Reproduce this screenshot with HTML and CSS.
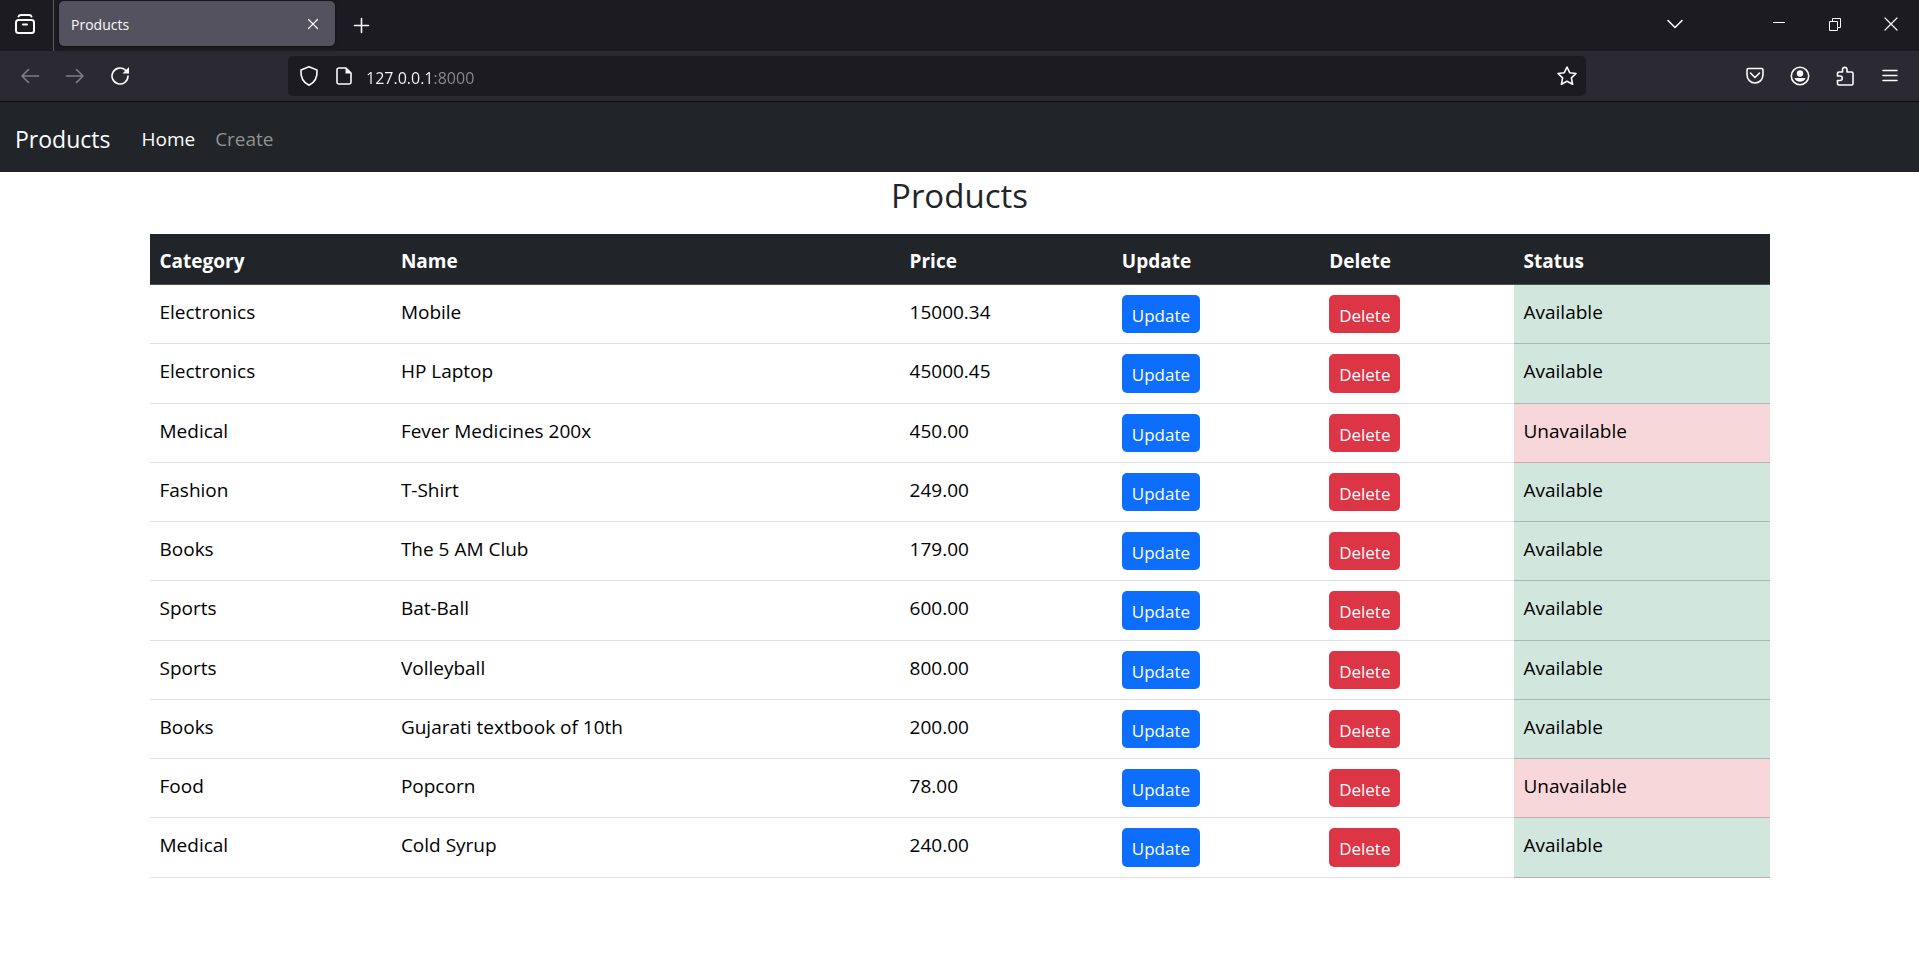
FILE: index.html
```html
<!DOCTYPE html>
<html lang="en">
<head>
<meta charset="utf-8">
<title>Products</title>
<link rel="stylesheet" href="styles.css">
</head>
<body>
<header class="browser">
  <div class="tabbar">
    <button class="view-btn" aria-label="Firefox View">
      <svg class="icon bold" width="24" height="24" viewBox="0 0 24 24"><rect x="3" y="8" width="18" height="13" rx="2.5"/><path d="M5.500 4.500Q6 3 8 3H16Q18 3 18.500 4.500M10 12.500H14"/></svg>
    </button>
    <div class="tab">
      <span class="tab-title">Products</span>
      <button class="tab-close" aria-label="Close tab">
        <svg class="icon thin" width="12" height="12" viewBox="0 0 12 12"><path d="M1.500 1.500L10.500 10.500M10.500 1.500L1.500 10.500"/></svg>
      </button>
    </div>
    <button class="tool" aria-label="New tab">
      <svg class="icon" width="17" height="17" viewBox="0 0 17 17"><path d="M8.500 1.500V15.500M1.500 8.500H15.500"/></svg>
    </button>
    <div class="window-controls">
      <button class="list-tabs" aria-label="List all tabs">
        <svg class="icon" width="18" height="12" viewBox="0 0 18 12"><path d="M2 2.500L9 9.500L16 2.500"/></svg>
      </button>
      <button class="win" aria-label="Minimize">
        <svg class="icon crisp" width="14" height="14" viewBox="0 0 14 14"><path d="M1 5.500H13"/></svg>
      </button>
      <button class="win" aria-label="Restore">
        <svg class="icon crisp" width="14" height="14" viewBox="0 0 14 14"><path d="M1.500 4.500H9.500V13.500H1.500ZM4.500 4.500V1.500H12.500V10.500H9.500"/></svg>
      </button>
      <button class="win" aria-label="Close">
        <svg class="icon thin" width="14" height="14" viewBox="0 0 14 14"><path d="M1 1L13 13M13 1L1 13"/></svg>
      </button>
    </div>
  </div>
  <div class="toolbar">
    <div class="tools">
      <button class="tool dim" aria-label="Back">
        <svg class="icon" width="20" height="20" viewBox="0 0 20 20"><path d="M18.500 10H2M8.500 3.500L2 10L8.500 16.500"/></svg>
      </button>
      <button class="tool dim" aria-label="Forward">
        <svg class="icon" width="20" height="20" viewBox="0 0 20 20"><path d="M1.500 10H18M11.500 3.500L18 10L11.500 16.500"/></svg>
      </button>
      <button class="tool" aria-label="Reload">
        <svg class="icon" width="20" height="20" viewBox="0 0 20 20"><path d="M18 10A8 8 0 1 1 15.500 4.200"/><path class="solid" d="M19 1V7.500H12.500Z"/></svg>
      </button>
    </div>
    <div class="urlbar">
      <svg class="icon shield" width="20" height="22" viewBox="0 0 20 22"><path d="M10 1.700L18 5C18.600 12 15.500 17.500 10 20.300C4.500 17.500 1.400 12 2 5Z"/></svg>
      <svg class="icon" width="18" height="20" viewBox="0 0 18 20"><path d="M11 2H4Q2 2 2 4V16Q2 18 4 18H14Q16 18 16 16V7Z"/><path class="solid" d="M10.500 1.500V7.500H16.500Z"/></svg>
      <input class="url" type="text" value="127.0.0.1:8000" aria-label="Address">
      <button class="star" aria-label="Bookmark">
        <svg class="icon" width="22" height="22" viewBox="0 0 22 22"><path d="M11 2L13.700 7.700L20 8.500L15.400 12.900L16.600 19.300L11 16.300L5.400 19.300L6.600 12.900L2 8.500L8.300 7.700Z"/></svg>
      </button>
    </div>
    <div class="tools">
      <button class="tool" aria-label="Pocket">
        <svg class="icon" width="20" height="20" viewBox="0 0 20 20"><path d="M3.500 2.500H16.500Q18 2.500 18 4V8.500C18 13.500 14.500 17 10 17S2 13.500 2 8.500V4Q2 2.500 3.500 2.500ZM5.500 7L10 11.500L14.500 7"/></svg>
      </button>
      <button class="tool" aria-label="Account">
        <svg class="icon" width="20" height="20" viewBox="0 0 20 20"><circle cx="10" cy="10" r="8.700"/><circle class="solid" cx="10" cy="7.500" r="3.200"/><path class="solid" d="M4.500 12H15.500C15 14.500 12.500 15.700 10 15.700S5 14.500 4.500 12Z"/></svg>
      </button>
      <button class="tool" aria-label="Extensions">
        <svg class="icon" width="20" height="22" viewBox="0 0 20 22"><path d="M7.500 7V4.200A2.300 2.300 0 0 1 12 4.200V7H16.500Q18 7 18 8.500V18.500Q18 20 16.500 20H4Q2.500 20 2.500 18.500V15.500H5A2 2 0 0 0 5 11H2.500V8.500Q2.500 7 4 7Z"/></svg>
      </button>
      <button class="tool" aria-label="Menu">
        <svg class="icon" width="16" height="16" viewBox="0 0 16 16"><path d="M1 2.500H15M1 7.500H15M1 12.500H15"/></svg>
      </button>
    </div>
  </div>
</header>

<nav class="navbar">
  <a class="brand" href="#">Products</a>
  <a class="nav-link active" href="#">Home</a>
  <a class="nav-link" href="#create">Create</a>
</nav>

<main class="container">
  <h1 class="title">Products</h1>
  <table class="products">
    <colgroup>
      <col class="col-category"><col class="col-name"><col class="col-price"><col class="col-update"><col class="col-delete"><col class="col-status">
    </colgroup>
    <thead>
      <tr><th>Category</th><th>Name</th><th>Price</th><th>Update</th><th>Delete</th><th>Status</th></tr>
    </thead>
    <tbody>
      <tr><td>Electronics</td><td>Mobile</td><td>15000.34</td><td class="action"><button class="btn primary">Update</button></td><td class="action"><button class="btn danger">Delete</button></td><td class="available">Available</td></tr>
      <tr><td>Electronics</td><td>HP Laptop</td><td>45000.45</td><td class="action"><button class="btn primary">Update</button></td><td class="action"><button class="btn danger">Delete</button></td><td class="available">Available</td></tr>
      <tr><td>Medical</td><td>Fever Medicines 200x</td><td>450.00</td><td class="action"><button class="btn primary">Update</button></td><td class="action"><button class="btn danger">Delete</button></td><td class="unavailable">Unavailable</td></tr>
      <tr><td>Fashion</td><td>T-Shirt</td><td>249.00</td><td class="action"><button class="btn primary">Update</button></td><td class="action"><button class="btn danger">Delete</button></td><td class="available">Available</td></tr>
      <tr><td>Books</td><td>The 5 AM Club</td><td>179.00</td><td class="action"><button class="btn primary">Update</button></td><td class="action"><button class="btn danger">Delete</button></td><td class="available">Available</td></tr>
      <tr><td>Sports</td><td>Bat-Ball</td><td>600.00</td><td class="action"><button class="btn primary">Update</button></td><td class="action"><button class="btn danger">Delete</button></td><td class="available">Available</td></tr>
      <tr><td>Sports</td><td>Volleyball</td><td>800.00</td><td class="action"><button class="btn primary">Update</button></td><td class="action"><button class="btn danger">Delete</button></td><td class="available">Available</td></tr>
      <tr><td>Books</td><td>Gujarati textbook of 10th</td><td>200.00</td><td class="action"><button class="btn primary">Update</button></td><td class="action"><button class="btn danger">Delete</button></td><td class="available">Available</td></tr>
      <tr><td>Food</td><td>Popcorn</td><td>78.00</td><td class="action"><button class="btn primary">Update</button></td><td class="action"><button class="btn danger">Delete</button></td><td class="unavailable">Unavailable</td></tr>
      <tr><td>Medical</td><td>Cold Syrup</td><td>240.00</td><td class="action"><button class="btn primary">Update</button></td><td class="action"><button class="btn danger">Delete</button></td><td class="available">Available</td></tr>
    </tbody>
  </table>
</main>
</body>
</html>
```

FILE: styles.css
```css
* {
  box-sizing: border-box;
}

body {
  margin: 0;
  background: #fff;
  color: #212529;
  font: 19px/30px "Open Sans", "Noto Sans", sans-serif;
}

button,
input {
  margin: 0;
  padding: 0;
  border: 0;
  background: none;
  color: inherit;
  font: inherit;
}

button {
  display: flex;
  align-items: center;
  justify-content: center;
}

/* Icons */
.icon {
  display: block;
  flex: none;
  fill: none;
  stroke: currentColor;
  stroke-width: 1.6;
  stroke-linecap: round;
  stroke-linejoin: round;
}

.icon .solid {
  fill: currentColor;
  stroke: none;
}

.thin {
  stroke-width: 1.2;
}

.bold {
  stroke-width: 2;
}

.crisp {
  stroke-width: 1;
  stroke-linecap: butt;
  stroke-linejoin: miter;
}

/* Browser window */
.browser {
  color: #fbfbfe;
  background: #2b2a33;
  border-bottom: 1px solid #0c0c0d;
}

.tabbar {
  display: flex;
  align-items: center;
  height: 51px;
  background: #1c1b22;
}

.view-btn {
  width: 54px;
  height: 51px;
  padding: 0 4px 4px 0;
  border-right: 1px solid #5b5a63;
}

.tab {
  display: flex;
  align-items: center;
  justify-content: space-between;
  width: 276px;
  height: 45px;
  margin: 0 4px 4px 5px;
  padding: 0 16px 0 12px;
  border-radius: 5px;
  background: #55525f;
  box-shadow: 0 0 3px #0c0c0d;
  font-size: 14px;
}

.tab-title {
  padding-top: 2px;
}

.tool {
  width: 45px;
  height: 45px;
}

.dim {
  color: #7f7e85;
}

.window-controls {
  display: flex;
  margin-left: auto;
  padding-bottom: 4px;
}

.list-tabs {
  width: 45px;
  height: 45px;
  margin-right: 54px;
}

.win {
  width: 56px;
  height: 45px;
}

.toolbar {
  display: flex;
  align-items: center;
  gap: 146px;
  height: 50px;
  padding: 0 7px;
}

.tools {
  display: flex;
}

.urlbar {
  display: flex;
  flex: 1;
  align-items: center;
  gap: 13px;
  height: 40px;
  padding: 0 8px 0 11px;
  border-radius: 5px;
  background: #1c1b22;
}

.shield {
  margin-right: 3px;
}

.url {
  flex: 1;
  min-width: 0;
  height: 40px;
  padding: 3px 0 0;
  color: transparent;
  font-size: 16px;
  background: linear-gradient(to right, #fbfbfe 68px, #8b8a90 68px);
  background-clip: text;
  -webkit-background-clip: text;
}

.star {
  height: 40px;
}

/* Site navigation */
.navbar {
  display: flex;
  align-items: center;
  height: 70px;
  padding: 3px 15px 0;
  background: #212529;
}

.brand {
  margin-right: 31px;
  color: #fff;
  font-size: 23px;
  text-decoration: none;
}

.nav-link {
  margin-right: 20px;
  color: #909294;
  text-decoration: none;
}

.nav-link.active {
  color: #fff;
}

/* Product list */
.container {
  max-width: 1650px;
  margin: 0 auto;
  padding: 0 15px;
}

.title {
  margin: 0 0 15px;
  font-size: 33px;
  font-weight: 400;
  line-height: 47px;
  text-align: center;
}

.products {
  width: 100%;
  table-layout: fixed;
  border-spacing: 0;
  color: #000;
}

.col-category { width: 14.9%; }
.col-name { width: 31.4%; }
.col-price { width: 13.1%; }
.col-update { width: 12.8%; }
.col-delete { width: 12%; }
.col-status { width: 15.8%; }

.products th,
.products td {
  padding: 12px 10px 8px;
  border-bottom: 1px solid #dee2e6;
  text-align: left;
  vertical-align: top;
}

.products th {
  border-color: #4d5154;
  background: #212529;
  color: #fff;
  font-weight: 700;
}

.products .action {
  padding: 10px;
}

.products .available {
  border-color: #a7b9b1;
  background: #d1e7dd;
}

.products .unavailable {
  border-color: #c6acae;
  background: #f8d7da;
}

.btn {
  height: 38px;
  padding: 3px 10px 0;
  border-radius: 5px;
  color: #fff;
  font-size: 17px;
}

.products tr:nth-child(4n + 2) .btn {
  height: 39px;
}

.primary {
  background: #0d6efd;
}

.danger {
  background: #dc3545;
}
```
